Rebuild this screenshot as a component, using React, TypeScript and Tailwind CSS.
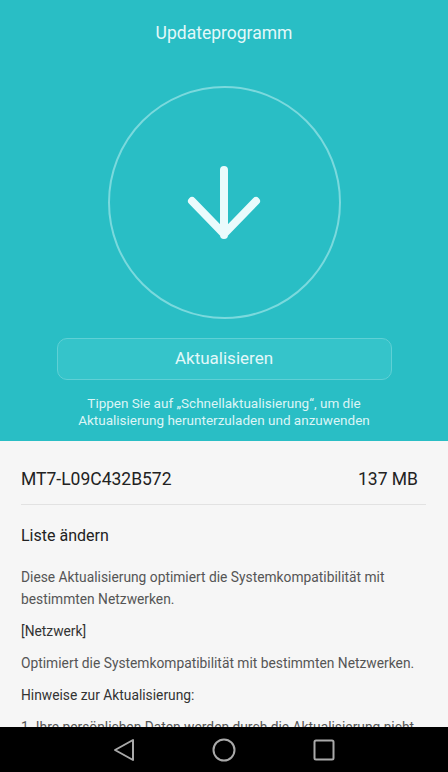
export default function App() {
  return (
    <div
      className="flex h-[772px] w-[448px] flex-col overflow-hidden bg-[#f6f6f6]"
      style={{ fontFamily: 'Roboto, "Noto Sans", sans-serif' }}
    >
      {/* Teal header */}
      <section className="flex h-[441px] shrink-0 flex-col items-center bg-[#29bec5]">
        <h1 className="mt-[21px] text-[17.5px] leading-[24px] text-[#e2f8f9]">Updateprogramm</h1>

        <div className="mt-[41px] flex h-[233px] w-[233px] items-center justify-center rounded-full border-2 border-[#7ad9dd]">
          <svg width="80" height="80" viewBox="0 0 80 80" fill="none" className="mt-[1px]">
            <path
              d="M40 7 V72 M8 38 L40 71 L72 38"
              stroke="#eafbfc"
              strokeWidth="8"
              strokeLinecap="round"
              strokeLinejoin="round"
            />
          </svg>
        </div>

        <button className="mt-[19px] h-[42px] w-[335px] rounded-[10px] border border-[#5fd0d5] bg-[#35c4ca] text-[17px] text-[#e2f8f9]">
          Aktualisieren
        </button>

        <p className="mt-[15px] text-center text-[13.5px] leading-[17px] text-[#dcf5f6]">
          Tippen Sie auf „Schnellaktualisierung“, um die
          <br />
          Aktualisierung herunterzuladen und anzuwenden
        </p>
      </section>

      {/* Details */}
      <section className="flex-1 overflow-hidden px-[21px]">
        <div className="flex items-center justify-between pt-[26px] pb-[13px] text-[17.5px] leading-[24px] text-[#222]">
          <span>MT7-L09C432B572</span>
          <span className="mr-[9px]">137 MB</span>
        </div>
        <div className="mr-[1px] h-px bg-[#e2e2e2]" />

        <h2 className="mt-[19px] text-[16px] leading-[24px] text-[#222]">Liste ändern</h2>

        <div className="mt-[18px] flex flex-col gap-[10px] text-[13.8px] leading-[22px]">
          <p className="text-[#555]">
            Diese Aktualisierung optimiert die Systemkompatibilität mit bestimmten Netzwerken.
          </p>
          <p className="text-[#333]">[Netzwerk]</p>
          <p className="text-[#555]">Optimiert die Systemkompatibilität mit bestimmten Netzwerken.</p>
          <p className="text-[#333]">Hinweise zur Aktualisierung:</p>
          <p className="text-[#555]">
            1. Ihre persönlichen Daten werden durch die Aktualisierung nicht beeinträchtigt.
          </p>
        </div>
      </section>

      {/* Navigation bar */}
      <nav className="flex h-[45px] shrink-0 items-center justify-center gap-[77px] bg-black">
        <svg width="22" height="24" viewBox="0 0 22 24" fill="none">
          <path d="M20 2 V22 L2 12 Z" stroke="#a9a9a9" strokeWidth="2" strokeLinejoin="round" />
        </svg>
        <svg width="24" height="24" viewBox="0 0 24 24" fill="none">
          <circle cx="12" cy="12" r="10.5" stroke="#a9a9a9" strokeWidth="2" />
        </svg>
        <svg width="22" height="22" viewBox="0 0 22 22" fill="none">
          <rect x="1.5" y="1.5" width="19" height="19" rx="1.5" stroke="#a9a9a9" strokeWidth="2" />
        </svg>
      </nav>
    </div>
  );
}
